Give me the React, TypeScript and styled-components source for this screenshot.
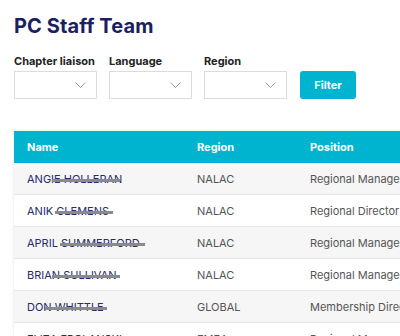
import styled, { createGlobalStyle } from "styled-components"

const GlobalStyle = createGlobalStyle`
    html, body {
        margin: 0;
        padding: 0;
        background: #ffffff;
        overflow: hidden;
        font-family: "Inter", "Open Sans", sans-serif;
    }
`

const Page = styled.div`
    width: 400px;
    height: 336px;
    padding: 14px 0 0 14px;
    box-sizing: border-box;
    overflow: hidden;
`

const Title = styled.h1`
    margin: 0;
    font-size: 20px;
    line-height: 24px;
    font-weight: 700;
    color: #1b2060;
    letter-spacing: 0.1px;
`

const Filters = styled.div`
    display: flex;
    align-items: flex-end;
    gap: 12px;
    margin-top: 16px;
`

const Field = styled.div`
    display: flex;
    flex-direction: column;
    gap: 3px;
`

const Label = styled.label`
    font-size: 11px;
    line-height: 14px;
    font-weight: 700;
    color: #222;
`

const Select = styled.div`
    width: 83px;
    height: 28px;
    box-sizing: border-box;
    border: 1px solid #dcdcdc;
    background: #fff;
    display: flex;
    align-items: center;
    justify-content: flex-end;
    padding-right: 10px;
`

const FilterButton = styled.button`
    margin-left: 1px;
    width: 56px;
    height: 28px;
    border: none;
    border-radius: 3px;
    background: #00b3cf;
    color: #fff;
    font-family: inherit;
    font-size: 11px;
    font-weight: 700;
`

const Table = styled.table`
    margin-top: 32px;
    width: 600px;
    border-collapse: collapse;
    table-layout: fixed;
    box-shadow: 0 0 3px rgba(0, 0, 0, 0.12);
`

// widths are content widths; 13px left padding is added on top
const HeadCell = styled.th<{ $width: number }>`
    width: ${({ $width }) => $width}px;
    height: 32px;
    padding: 0 0 0 13px;
    background: #00b3cf;
    color: #fff;
    text-align: left;
    font-size: 11px;
    font-weight: 700;
`

const Row = styled.tr<{ $shaded: boolean }>`
    background: ${({ $shaded }) => ($shaded ? "#f6f6f6" : "#ffffff")};
    border-bottom: 1px solid #e6e6e6;
`

const Cell = styled.td<{ $name?: boolean }>`
    height: 31px;
    padding: 0 0 0 13px;
    font-size: 11px;
    color: ${({ $name }) => ($name ? "#262c6c" : "#555")};
    white-space: nowrap;
    overflow: hidden;
`

const Redacted = styled.span<{ $from: number; $to: number }>`
    position: relative;
    &::after {
        content: "";
        position: absolute;
        left: ${({ $from }) => $from}px;
        width: ${({ $to, $from }) => $to - $from}px;
        top: 50%;
        height: 3px;
        background: #8a8a8a;
    }
`

const Chevron = () => (
    <svg width="11" height="6" viewBox="0 0 11 6">
        <path d="M0.5 0.5 L5.5 5.5 L10.5 0.5" fill="none" stroke="#999" strokeWidth="1" />
    </svg>
)

const staff = [
    { name: "ANGIE HOLLERAN", bar: [25, 93], region: "NALAC", position: "Regional Manager" },
    { name: "ANIK CLEMENS", bar: [28, 86], region: "NALAC", position: "Regional Director" },
    { name: "APRIL SUMMERFORD", bar: [33, 118], region: "NALAC", position: "Regional Manager" },
    { name: "BRIAN SULLIVAN", bar: [25, 93], region: "NALAC", position: "Regional Manager" },
    { name: "DON WHITTLE", bar: [18, 80], region: "GLOBAL", position: "Membership Director" },
    { name: "ELIZA FROLANSKI", bar: [30, 95], region: "EMEA", position: "Regional Manager" },
]

export default function App() {
    return (
        <Page>
            <GlobalStyle />
            <Title>PC Staff Team</Title>
            <Filters>
                {["Chapter liaison", "Language", "Region"].map((label) => (
                    <Field key={label}>
                        <Label>{label}</Label>
                        <Select>
                            <Chevron />
                        </Select>
                    </Field>
                ))}
                <FilterButton>Filter</FilterButton>
            </Filters>
            <Table>
                <thead>
                    <tr>
                        <HeadCell $width={157}>Name</HeadCell>
                        <HeadCell $width={100}>Region</HeadCell>
                        <HeadCell $width={304}>Position</HeadCell>
                    </tr>
                </thead>
                <tbody>
                    {staff.map((person, i) => (
                        <Row key={person.name} $shaded={i % 2 === 0}>
                            <Cell $name>
                                <Redacted $from={person.bar[0]} $to={person.bar[1]}>{person.name}</Redacted>
                            </Cell>
                            <Cell>{person.region}</Cell>
                            <Cell>{person.position}</Cell>
                        </Row>
                    ))}
                </tbody>
            </Table>
        </Page>
    )
}
